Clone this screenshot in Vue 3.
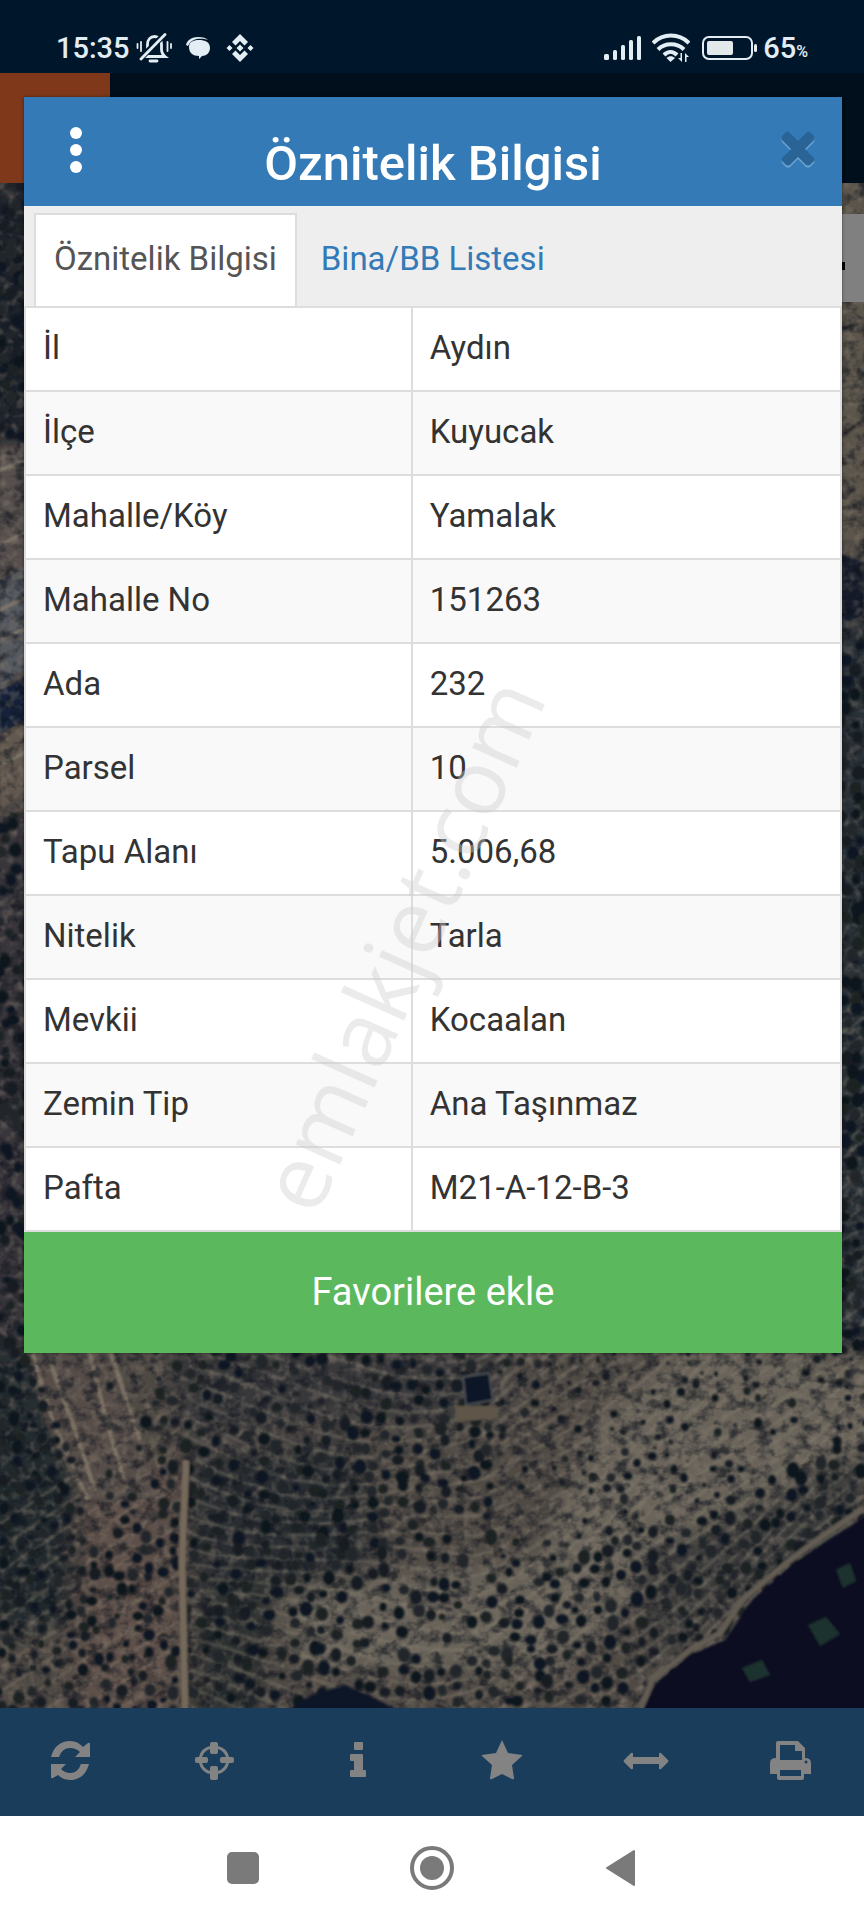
<template>
  <div class="screen">
    <header class="status-bar">
      <div class="status-left">
        <span class="clock">15:35</span>
        <svg class="bell" viewBox="0 0 36 30" width="36" height="30">
          <g fill="none" stroke="#e3edf4" stroke-width="2.8" stroke-linecap="round">
            <path d="M8 23.500h21c-2.500-2-3.500-4.500-3.500-7.500v-4.500c0-5-3-8-7-8s-7 3-7 8v4.500c0 3-1 5.500-3.500 7.500z" />
            <path d="M5 25L28 2" stroke="#00172b" stroke-width="6" />
            <path d="M5 26L29 1.500M14 28h7" />
            <path d="M1.500 11v4M5 9v9M31.500 9v9M35 11v4" stroke-width="1.800" />
          </g>
        </svg>
        <svg class="chat" viewBox="0 0 24 24" width="24" height="24">
          <path d="M0 9C1 4 6 1 12 1c5 0 8 1 10 3-4-1.500-12-2-16 1-2 1-3 3-4 5z" fill="#e3edf4" />
          <path d="M3 11c0-5 4-7 10-7s11 2 11 8c0 5-4 8-8 8l-3 3v-3C7 20 3 17 3 11z" fill="#e3edf4" />
        </svg>
        <svg viewBox="0 0 28 28" width="28" height="28">
          <g fill="#e3edf4">
            <path d="M14 0l8 8-3.500 3.500L14 7l-4.500 4.500L6 8zM14 28l8-8-3.500-3.500L14 21l-4.500-4.500L6 20z" />
            <path d="M14 10.500l3.500 3.500-3.500 3.500-3.500-3.500zM3.500 11L6.500 14l-3 3-3-3zM24.500 11l3 3-3 3-3-3z" />
          </g>
        </svg>
      </div>
      <div class="status-right">
        <svg viewBox="0 0 38 26" width="38" height="26">
          <g fill="#e3edf4">
            <rect x="0" y="19" width="5" height="6" rx="1.500" />
            <rect x="9" y="15" width="4" height="10" rx="1.500" />
            <rect x="17" y="10" width="4" height="15" rx="1.500" />
            <rect x="25" y="5" width="4" height="20" rx="1.500" />
            <rect x="33" y="1" width="4" height="24" rx="1.500" />
          </g>
        </svg>
        <svg class="wifi" viewBox="0 0 38 30" width="38" height="30">
          <g fill="none" stroke="#e3edf4" stroke-width="4">
            <path d="M1 10C11 0 27 0 37 10" />
            <path d="M6 16.500c7-7 19-7 26 0" />
            <path d="M12 22c4-4 9-4 13 0" />
          </g>
          <path d="M14.500 25c2.500-2.500 6-2.500 8.500 0L18.500 29z" fill="#e3edf4" />
          <path d="M30 20v9l-4-4h2.500v-5zM33 29v-9l4 4h-2.500v5z" fill="#e3edf4" />
        </svg>
        <svg class="battery" viewBox="0 0 56 26" width="56" height="26">
          <rect x="1" y="2" width="49" height="22" rx="6" fill="none" stroke="#e3edf4" stroke-width="2" />
          <rect x="5" y="6" width="26" height="14" rx="2" fill="#e3e8ea" />
          <rect x="52" y="9" width="3" height="8" rx="1.500" fill="#e3edf4" />
        </svg>
        <span class="clock">65</span><span class="percent">%</span>
      </div>
    </header>

    <main class="app">
      <div class="app-bar"><div class="app-logo"></div></div>
      <div class="map">
        <svg class="map-image" viewBox="0 183 864 1525" preserveAspectRatio="xMidYMin slice">
          <defs>
            <filter id="grain" x="0" y="0" width="100%" height="100%" color-interpolation-filters="sRGB">
              <feTurbulence type="fractalNoise" baseFrequency="0.07 0.09" numOctaves="3" seed="4" />
              <feColorMatrix values="0 0 0 0 0.05  0 0 0 0 0.07  0 0 0 0 0.11  3.200 0 0 0 -1.400" />
            </filter>
            <filter id="dust" x="0" y="0" width="100%" height="100%" color-interpolation-filters="sRGB">
              <feTurbulence type="fractalNoise" baseFrequency="0.11" numOctaves="2" seed="11" />
              <feColorMatrix values="0 0 0 0 0.520  0 0 0 0 0.480  0 0 0 0 0.430  0 2.400 0 0 -1.100" />
            </filter>
            <filter id="soft"><feGaussianBlur stdDeviation="12" /></filter>
            <filter id="edge" x="0" y="0" width="100%" height="100%"><feGaussianBlur stdDeviation="1" /></filter>
          </defs>
          <rect y="183" width="864" height="1525" fill="#504a45" />
          <g filter="url(#soft)">
            <path d="M-40 183H60V440H-40z" fill="#1b2029" />
            <path d="M-40 820H60V1350H-40z" fill="#37353a" />
            <path d="M-40 1350H30L80 1500V1620L-40 1640z" fill="#23292f" />
            <path d="M180 1460L350 1440 380 1560 200 1640z" fill="#2c2f31" />
            <path d="M170 1350H500V1420H340L180 1440z" fill="#39373a" />
            <path d="M190 1600L270 1570 260 1750H190z" fill="#2e3031" />
            <path d="M900 1370L700 1340 600 1410 540 1560 280 1590 300 1670 560 1670 700 1540 900 1460z" fill="#69645a" />
            <path d="M80 1500L180 1450V1750H70z" fill="#5d5048" />
            <path d="M800 620H900V1350H800z" fill="#2c3037" />
            <path d="M640 1560L864 1450V1540L740 1600 650 1670z" fill="#3a3a3a" />
          </g>
          <g filter="url(#edge)">
            <path d="M0 452L40 436V560L0 580z" fill="#574f4d" />
            <path d="M0 580L40 560V655L0 690z" fill="#565a60" />
            <path d="M0 690L40 670V710L0 735z" fill="#18243a" />
            <path d="M0 735L40 715V780L0 810z" fill="#625950" />
            <path d="M0 470L40 455M0 545L40 525M0 610L40 590M0 640L40 622M0 765L40 745" stroke="#81796c" stroke-width="3" />
            <path d="M830 183H864V540H830z" fill="#5b554c" />
            <path d="M835 440L864 420M835 330L864 323" stroke="#2c2b28" stroke-width="3" />
            <path d="M830 550L864 562V615L830 630z" fill="#151b2c" />
            <path d="M24 1345L44 1420 84 1500 160 1500 112 1345z" fill="#564d48" />
            <path d="M30 1345L52 1420 88 1500M44 1345L75 1430 95 1490M88 1345L106 1420 124 1480M108 1345L140 1440" fill="none" stroke="#7b7163" stroke-width="4" />
            <path v-for="(c, i) in contours" :key="i" :d="c" fill="none" stroke="#8a8373" stroke-width="3" opacity=".35" />
            <path v-for="n in 14" :key="'f' + n" :d="`M0 ${1500 + n * 24}L180 ${1380 + n * 24}`" stroke="#85786a" stroke-width="3" opacity=".4" />
          </g>
          <rect y="183" width="864" height="1525" filter="url(#grain)" opacity=".6" />
          <rect y="183" width="864" height="1525" filter="url(#dust)" opacity=".5" />
          <g filter="url(#edge)">
            <ellipse
              v-for="(t, i) in trees"
              :key="'t' + i"
              :cx="t.x"
              :cy="t.y"
              :rx="t.r"
              :ry="t.r * t.tall"
              :fill="t.color"
            />
            <path d="M186 1460L182 1560 185 1712" fill="none" stroke="#75695a" stroke-width="7" />
            <path d="M864 1508L820 1538 790 1560 742 1600 720 1633 690 1650 652 1680 640 1712" fill="none" stroke="#625c52" stroke-width="6" />
            <path d="M870 1514L828 1540 790 1566 752 1600 725 1640 690 1655 655 1684 642 1712H870z" fill="#0a0f22" />
            <path d="M285 1712L312 1695 345 1685 375 1698 400 1712z" fill="#0d1226" />
            <path d="M742 1668l20-8 8 15-20 7zM808 1625l18-8 14 17-20 12zM836 1570l14-7 6 18-13 7z" fill="#1b302f" />
            <path d="M455 1406h40l4 12-42 4z" fill="#5f5648" />
            <path d="M463 1377l26-4 4 27-27 5z" fill="#0d1425" stroke="#4a4d53" stroke-width="2" />
          </g>
        </svg>
        <button class="map-tool" type="button" aria-label="Harita"><i></i></button>
      </div>

      <section class="modal" role="dialog">
        <div class="modal-header">
          <button class="menu-btn" type="button" aria-label="Menü">
            <svg viewBox="0 0 12 46" width="12" height="46" fill="#fff">
              <circle cx="6" cy="6" r="6" />
              <circle cx="6" cy="23" r="6" />
              <circle cx="6" cy="40" r="6" />
            </svg>
          </button>
          <h1>Öznitelik Bilgisi</h1>
          <button class="close-btn" type="button" aria-label="Kapat">
            <svg viewBox="0 0 36 38" width="36" height="38">
              <path :d="cross" fill="#6ea4d2" transform="translate(0 2)" />
              <path :d="cross" fill="#2a6496" />
            </svg>
          </button>
        </div>
        <nav class="tabs">
          <a
            v-for="tab in tabs"
            :key="tab"
            href="#"
            :class="{ active: tab === activeTab }"
            @click.prevent="activeTab = tab"
          >{{ tab }}</a>
        </nav>
        <table class="attributes">
          <tbody>
            <tr v-for="row in rows" :key="row[0]">
              <th scope="row">{{ row[0] }}</th>
              <td>{{ row[1] }}</td>
            </tr>
          </tbody>
        </table>
        <button class="favorite-btn" type="button">Favorilere ekle</button>
      </section>
    </main>

    <nav class="toolbar">
      <button v-for="tool in tools" :key="tool.label" type="button" :aria-label="tool.label">
        <svg viewBox="0 0 46 42" width="46" height="42">
          <path :d="tool.path" fill="#838383" fill-rule="evenodd" />
        </svg>
      </button>
    </nav>

    <nav class="system-nav">
      <button type="button" aria-label="Son uygulamalar">
        <svg viewBox="0 0 44 44" width="44" height="44"><rect x="6" y="6" width="32" height="32" rx="5" fill="#7a7a7a" /></svg>
      </button>
      <button type="button" aria-label="Ana ekran">
        <svg viewBox="0 0 44 44" width="44" height="44">
          <circle cx="22" cy="22" r="20" fill="none" stroke="#7a7a7a" stroke-width="4" />
          <circle cx="22" cy="22" r="12" fill="#7a7a7a" />
        </svg>
      </button>
      <button type="button" aria-label="Geri">
        <svg viewBox="0 0 44 44" width="44" height="44">
          <path d="M8 22L35 5V39z" fill="#7a7a7a" stroke="#7a7a7a" stroke-width="2" stroke-linejoin="round" />
        </svg>
      </button>
    </nav>

    <svg class="watermark" viewBox="0 0 864 1920">
      <text x="432" y="958" text-anchor="middle" transform="rotate(-66 432 958)">emlakjet.com</text>
    </svg>
  </div>
</template>

<script setup>
import { ref } from 'vue'

const tabs = ['Öznitelik Bilgisi', 'Bina/BB Listesi']
const activeTab = ref(tabs[0])

const rows = [
  ['İl', 'Aydın'],
  ['İlçe', 'Kuyucak'],
  ['Mahalle/Köy', 'Yamalak'],
  ['Mahalle No', '151263'],
  ['Ada', '232'],
  ['Parsel', '10'],
  ['Tapu Alanı', '5.006,68'],
  ['Nitelik', 'Tarla'],
  ['Mevkii', 'Kocaalan'],
  ['Zemin Tip', 'Ana Taşınmaz'],
  ['Pafta', 'M21-A-12-B-3']
]

const cross = 'M9 1L18 10 27 1Q29 0 31 2L34 5Q35 7 34 9L25 18 34 27Q35 29 34 30L30 34Q28 35 26 34L18 26 10 34Q8 35 6 34L2 30Q1 28 2 27L11 18 2 9Q1 7 2 5L6 1Q8 0 9 1z'

const tools = [
  {
    label: 'Yenile',
    path: 'M4 17C7 6 14 1 23 1q8 0 13 6l5-4q2-1 2 1v13H28l5-5Q29 8 23 8q-8 0-11 9zM42 24C39 35 32 40 23 40q-7 0-12-5l-5 3q-2 1-2-1V24h15l-5 5q4 4 9 4 8 0 11-9z'
  },
  {
    label: 'Konum',
    path: 'M21 2h4q2 0 2 2v2q9 2 11 11h3q2 0 2 2v2q0 2-2 2h-3q-2 9-11 11v4q0 2-2 2h-4q-2 0-2-2v-4Q10 32 8 23H6q-2 0-2-2v-2q0-2 2-2h2q2-9 11-11V4q0-2 2-2zM19 9q-6 2-8 8h4q2 0 2 2v2q0 2-2 2h-4q2 6 8 8v-3q0-2 2-2h4q2 0 2 2v3q6-2 8-8h-4q-2 0-2-2v-2q0-2 2-2h4q-2-6-8-8v3q0 2-2 2h-4q-2 0-2-2z'
  },
  {
    label: 'Bilgi',
    path: 'M20 2h7q1 0 1 1v6q0 1-1 1h-7q-1 0-1-1V3q0-1 1-1zM16 14h11q1 0 1 1v15h2q1 0 1 1v5q0 1-1 1H16q-1 0-1-1v-5q0-1 1-1h3v-9h-3q-1 0-1-1v-5q0-1 1-1z'
  },
  {
    label: 'Favoriler',
    path: 'M23 0l6 13 14 2q1 0 0 1L33 25l2 13q0 2-2 1l-10-5-10 5q-2 1-2-1l2-13L3 16q-1-1 0-1l14-2z'
  },
  {
    label: 'Ölç',
    path: 'M1 20l7-7q2-1 2 1v3h26v-3q0-2 2-1l7 7q1 1 0 2l-7 7q-2 1-2-1v-4H10v4q0 2-2 1l-7-7q-1-1 0-2z'
  },
  {
    label: 'Yazdır',
    path: 'M11 1h20l7 7v10q6 0 6 5v11h-7v4q0 2-2 2H12q-2 0-2-2v-4H3V23q0-5 6-5V3q0-2 2-2zM13 5v15h22v-9h-7V5zM13 30v6h21v-6zM39 20.500a1.500 1.500 0 1 0 .1 0z'
  }
]

// fixed seed keeps the orchard identical on every load
let seed = 77
function random() {
  seed = (seed * 16807) % 2147483647
  return seed / 2147483647
}

const palette = ['#10171e', '#161e24', '#1b2124', '#0e1520', '#20262a']
const trees = []

function plant(x, y, chance, size) {
  if (random() > chance) return
  trees.push({
    x: Math.round(x + (random() - 0.5) * 10),
    y: Math.round(y + (random() - 0.5) * 8),
    r: Math.round((size + random() * 3) * 10) / 10,
    tall: 0.8 + Math.round(random() * 5) / 10,
    color: palette[Math.floor(random() * palette.length)]
  })
}

// lower slope: rows that sag to the middle and rise towards the right
function slope(x, k) {
  const wave = 12 * Math.sin(x / 60 + k * 0.35)
  return 1300 + k * 16 + 60 * Math.sin((x - 120) / 190) + wave - Math.max(0, x - 480) * 0.55
}

const contours = []
for (let k = -3; k < 42; k++) {
  let d = ''
  for (let x = 190; x <= 870; x += 15) {
    const y = slope(x, k)
    d += `${d ? 'L' : 'M'}${x} ${Math.round(y - 8)}`
    if (y < 1350 || y > 1704) continue
    const openField = x > 500 && y < 1590 - (x - 500) * 0.42
    plant(x, y, openField ? 0.5 : 0.78, openField ? 1.5 : 3.5)
  }
  contours.push(d)
}
for (let x = 4; x < 180; x += 13) {
  for (let y = 1270; y < 1760; y += 14) {
    const ty = y - x * 0.5 + 60
    const strip = ty < 1500 && x > 30 + (ty - 1350) * 0.35 && x < 150
    if (ty > 1345) plant(x, ty, strip ? 0.1 : 0.65, 3)
  }
}
for (let y = 190; y < 1350; y += 13) {
  for (let x = 2; x < 28; x += 12) {
    if (y < 440 || y > 805) plant(x, y, 0.6, 4)
    if (y > 620) plant(x + 842, y, 0.7, 4)
  }
}
</script>

<style>
body {
  margin: 0;
}
</style>

<style scoped>
.screen {
  position: relative;
  display: flex;
  flex-direction: column;
  min-height: 100vh;
  overflow: hidden;
  background: #fff;
  font-family: Roboto, "Liberation Sans", sans-serif;
}

.screen svg {
  display: block;
}

button {
  border: 0;
  padding: 0;
  background: none;
  font-family: inherit;
  cursor: pointer;
}

.status-bar {
  display: flex;
  align-items: center;
  justify-content: space-between;
  box-sizing: border-box;
  height: 73px;
  padding: 22px 56px 0;
  background: #00172b;
  color: #e3edf4;
}

.status-left,
.status-right {
  display: flex;
  align-items: center;
}

.clock {
  font-size: 29px;
  font-weight: 500;
  line-height: 32px;
}

.percent {
  align-self: flex-end;
  font-size: 16px;
  font-weight: 500;
  line-height: 24px;
}

.bell {
  margin: 0 14px 0 6px;
}

.chat {
  margin-right: 16px;
}

.wifi {
  margin: 0 12px 0 10px;
}

.battery {
  margin-right: 5px;
}

.app {
  position: relative;
  display: flex;
  flex: 1;
  flex-direction: column;
}

.app-bar {
  height: 110px;
  background: #000f1b;
}

.app-logo {
  width: 110px;
  height: 110px;
  background: #7f381a;
}

.map {
  position: relative;
  flex: 1;
  overflow: hidden;
  background: #4b4641;
}

.map-image {
  position: absolute;
  inset: 0;
  width: 100%;
  height: 100%;
}

.map-tool {
  position: absolute;
  top: 31px;
  right: 0;
  display: flex;
  align-items: center;
  justify-content: center;
  width: 44px;
  height: 88px;
  background: #808080;
}

.map-tool i {
  width: 6px;
  height: 8px;
  margin-top: 16px;
  background: #000;
}

.modal {
  position: absolute;
  top: 24px;
  right: 22px;
  left: 24px;
  background: #fff;
  box-shadow: 0 0 3px rgba(0, 0, 0, 0.5);
}

.modal-header {
  display: grid;
  grid-template-columns: 104px 1fr 104px;
  height: 109px;
  background: #337ab7;
}

.menu-btn,
.close-btn {
  display: flex;
  align-items: center;
  justify-content: center;
  padding-bottom: 4px;
}

.close-btn {
  justify-self: end;
  width: 88px;
}

h1 {
  margin: 0;
  padding-top: 39px;
  color: #fff;
  font-size: 49px;
  font-weight: 500;
  line-height: 56px;
  text-align: center;
}

.tabs {
  display: flex;
  gap: 4px;
  box-sizing: border-box;
  height: 100px;
  padding: 7px 10px 0;
  background: #eee;
}

.tabs a {
  padding: 0 18px;
  border: 2px solid transparent;
  border-bottom: 0;
  color: #337ab7;
  font-size: 33px;
  line-height: 88px;
  text-decoration: none;
}

.tabs a.active {
  border-color: #ddd;
  background: #fff;
  color: #555;
}

.attributes {
  width: 100%;
  border-collapse: collapse;
  table-layout: fixed;
}

.attributes tr {
  height: 84px;
}

.attributes tr:nth-child(even) {
  background: #f9f9f9;
}

.attributes th,
.attributes td {
  box-sizing: border-box;
  padding: 0 17px 2px;
  border: 2px solid #ddd;
  color: #333;
  font-size: 33px;
  font-weight: 400;
  line-height: 40px;
  text-align: left;
}

.attributes th {
  width: 47.4%;
}

.favorite-btn {
  display: block;
  width: 100%;
  height: 121px;
  padding-bottom: 2px;
  background: #5cb85c;
  color: #fff;
  font-size: 38px;
}

.toolbar {
  display: flex;
  height: 108px;
  background: #1a3d5c;
}

.toolbar button {
  display: flex;
  flex: 1;
  align-items: center;
  justify-content: center;
  padding: 0 4px 2px 0;
}

.system-nav {
  display: flex;
  align-items: center;
  justify-content: center;
  gap: 145px;
  height: 104px;
  background: #fff;
}

.watermark {
  position: absolute;
  inset: 0;
  width: 100%;
  height: 100%;
  pointer-events: none;
}

.watermark text {
  fill: rgba(205, 205, 205, 0.4);
  font-family: "Open Sans", sans-serif;
  font-size: 91px;
}
</style>
